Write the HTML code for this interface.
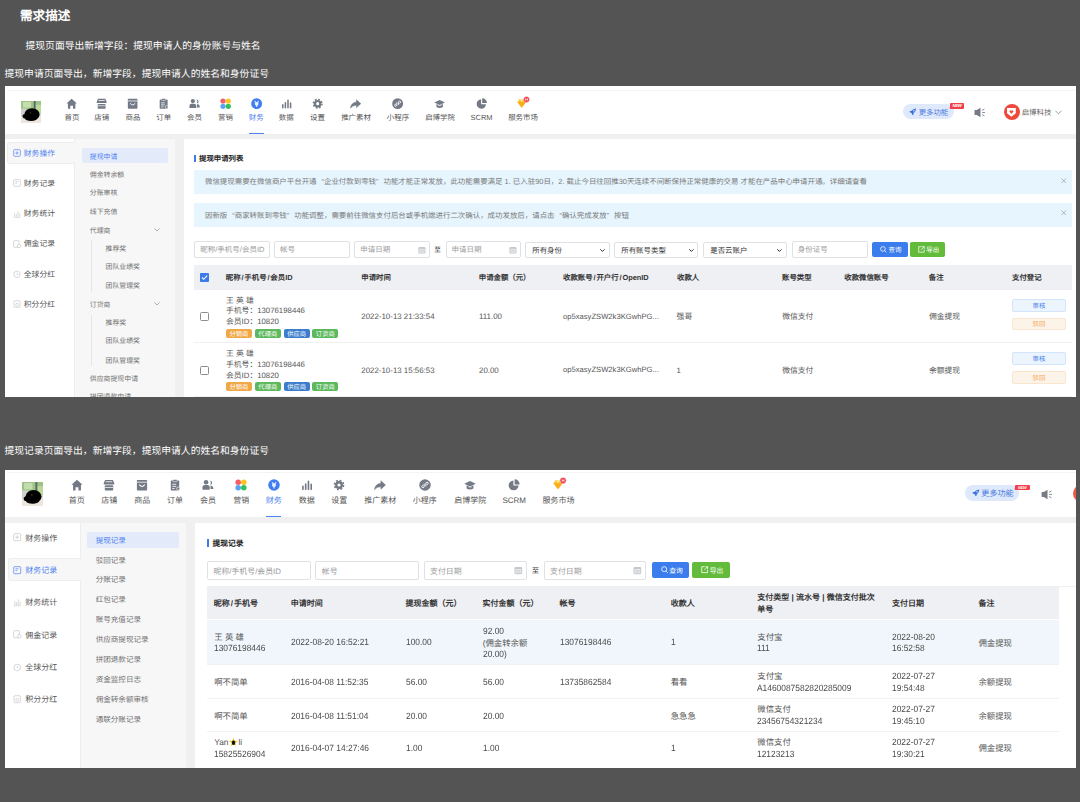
<!DOCTYPE html><html lang="zh-CN"><head><meta charset="utf-8"><style>
html,body{margin:0;padding:0;}
body{font-weight:300;text-rendering:geometricPrecision;width:1080px;height:802px;background:#545454;position:relative;overflow:hidden;font-family:"Liberation Sans",sans-serif;}
.a{position:absolute;}
svg.a{overflow:visible;}
.t{white-space:nowrap;}
.sl{padding:0 0.12em;}
.q1,.q2{display:inline-block;width:1em;}
.q1{text-align:right}
</style></head><body>
<div class="a t" style="left:20.00px;top:8px;font-size:12.6px;line-height:16px;color:#fff;font-weight:bold;">需求描述</div>
<div class="a t" style="left:25.50px;top:39px;font-size:9.8px;line-height:16px;color:#fff;">提现页面导出新增字段：提现申请人的身份账号与姓名</div>
<div class="a t" style="left:4.50px;top:67px;font-size:9.8px;line-height:16px;color:#fff;">提现申请页面导出，新增字段，提现申请人的姓名和身份证号</div>
<div class="a t" style="left:4.50px;top:444px;font-size:9.8px;line-height:16px;color:#fff;">提现记录页面导出，新增字段，提现申请人的姓名和身份证号</div>
<div class="a" style="left:5.00px;top:86.00px;width:1070.50px;height:48.00px;background:#fff"></div>
<div class="a" style="left:6.50px;top:90.00px;width:1069.00px;height:1.00px;background:#f4f4f4"></div>
<svg class="a" style="left:21px;top:101px" width="20" height="22" viewBox="0 0 100 115" preserveAspectRatio="none"><defs><filter id="bl86" x="-20%" y="-20%" width="140%" height="140%"><feGaussianBlur stdDeviation="3"/></filter></defs><rect width="100" height="115" fill="#dcdcd6"/><g filter="url(#bl86)"><rect x="0" y="0" width="100" height="60" fill="#9cc585"/><rect x="10" y="5" width="40" height="30" fill="#c4dcae"/><rect x="72" y="20" width="28" height="45" fill="#bcd99a"/><rect x="64" y="0" width="9" height="55" fill="#5b6670"/><rect x="0" y="40" width="30" height="40" fill="#cfcfcb"/><rect x="0" y="80" width="100" height="35" fill="#ece6df"/><ellipse cx="55" cy="70" rx="38" ry="32" fill="#050505"/><ellipse cx="22" cy="80" rx="14" ry="12" fill="#050505"/><ellipse cx="50" cy="92" rx="30" ry="12" fill="#050505"/></g><circle cx="47" cy="62" r="3.5" fill="#5d4d1c"/></svg>
<svg class="a" style="left:66.35px;top:98.35px" width="11.30" height="11.30" viewBox="0 0 20 20"><path d="M10 1.2 L19.2 9.6 L16.6 9.6 L16.6 18.2 Q16.6 19 15.8 19 L12.4 19 L12.4 13.6 L7.6 13.6 L7.6 19 L4.2 19 Q3.4 19 3.4 18.2 L3.4 9.6 L0.8 9.6 Z" fill="#737985"/></svg>
<div class="a t" style="left:72.00px;top:110px;font-size:7.45px;line-height:16px;color:#555;transform:translateX(-50%);">首页</div>
<svg class="a" style="left:96.10px;top:98.35px" width="11.30" height="11.30" viewBox="0 0 20 20"><path d="M3.5 1.5 H16.5 L19 7.5 Q19 9 17.5 9 H2.5 Q1 9 1 7.5 Z" fill="#737985"/><rect x="4.5" y="4" width="11" height="1.3" fill="#fff"/><rect x="3" y="10.5" width="14" height="8.5" rx="1.5" fill="#737985"/><rect x="3" y="13.3" width="14" height="1.2" fill="#fff"/></svg>
<div class="a t" style="left:101.75px;top:110px;font-size:7.45px;line-height:16px;color:#555;transform:translateX(-50%);">店铺</div>
<svg class="a" style="left:127.35px;top:98.35px" width="11.30" height="11.30" viewBox="0 0 20 20"><rect x="1.5" y="1.5" width="17" height="17.5" rx="1.2" fill="#737985"/><rect x="1.5" y="4.6" width="17" height="1.3" fill="#fff"/><path d="M5.8 9.8 Q10 15.2 14.2 9.8" stroke="#fff" stroke-width="1.7" fill="none" stroke-linecap="round"/></svg>
<div class="a t" style="left:133.00px;top:110px;font-size:7.45px;line-height:16px;color:#555;transform:translateX(-50%);">商品</div>
<svg class="a" style="left:158.10px;top:98.35px" width="11.30" height="11.30" viewBox="0 0 20 20"><path d="M3 3.5 Q3 2.5 4 2.5 H16 Q17 2.5 17 3.5 V19 H4 Q3 19 3 18 Z" fill="#737985"/><rect x="6.5" y="0.8" width="7" height="3.5" rx="1" fill="#737985" stroke="#fff" stroke-width="0.9"/><rect x="5.5" y="8" width="6.5" height="1.4" fill="#fff"/><rect x="5.5" y="11.5" width="6.5" height="1.4" fill="#fff"/><rect x="5.5" y="15" width="4" height="1.4" fill="#fff"/><circle cx="15.3" cy="16" r="2.6" fill="#737985" stroke="#fff" stroke-width="1"/></svg>
<div class="a t" style="left:163.75px;top:110px;font-size:7.45px;line-height:16px;color:#555;transform:translateX(-50%);">订单</div>
<svg class="a" style="left:188.85px;top:98.35px" width="11.30" height="11.30" viewBox="0 0 20 20"><circle cx="6.8" cy="5.4" r="3.8" fill="#737985"/><path d="M0.8 17.8 V13.8 Q0.8 10.2 4.4 10.2 H9.2 Q12.8 10.2 12.8 13.8 V17.8 Z" fill="#737985"/><path d="M12.6 2.6 Q17 2.8 17 6.4 Q17 9.6 13.4 9.8 Q14.8 8.2 14.8 6.2 Q14.8 4.2 12.6 2.6 Z" fill="#737985"/><path d="M14.2 10.8 Q18.8 11.2 18.8 14.8 V16.8 H14.2 Z" fill="#737985"/></svg>
<div class="a t" style="left:194.50px;top:110px;font-size:7.45px;line-height:16px;color:#555;transform:translateX(-50%);">会员</div>
<svg class="a" style="left:219.85px;top:98.35px" width="11.30" height="11.30" viewBox="0 0 20 20"><circle cx="5.3" cy="5.3" r="4.6" fill="#f25f6b"/><circle cx="14.7" cy="5.3" r="4.6" fill="#fcc520"/><circle cx="5.3" cy="14.7" r="4.6" fill="#5ba4f5"/><circle cx="14.7" cy="14.7" r="4.6" fill="#2fc25b"/></svg>
<div class="a t" style="left:225.50px;top:110px;font-size:7.45px;line-height:16px;color:#555;transform:translateX(-50%);">营销</div>
<svg class="a" style="left:250.60px;top:98.35px" width="11.30" height="11.30" viewBox="0 0 20 20"><circle cx="10" cy="10" r="9.6" fill="#3f7df0"/><path d="M7 5.8 L9 8.6 M13 5.8 L11 8.6" stroke="#e8efff" stroke-width="1.8" stroke-linecap="round"/><circle cx="10" cy="10.2" r="3.3" fill="#e8efff"/><path d="M10 12 V15" stroke="#e8efff" stroke-width="2" stroke-linecap="round"/></svg>
<div class="a t" style="left:256.25px;top:110px;font-size:7.45px;line-height:16px;color:#4d7ff0;transform:translateX(-50%);">财务</div>
<svg class="a" style="left:280.60px;top:98.35px" width="11.30" height="11.30" viewBox="0 0 20 20"><path d="M3.2 12 V17.2 M7.8 8.5 V17.2 M12.4 4 V17.2 M17 9 V17.2" stroke="#737985" stroke-width="2.7" stroke-linecap="round"/></svg>
<div class="a t" style="left:286.25px;top:110px;font-size:7.45px;line-height:16px;color:#555;transform:translateX(-50%);">数据</div>
<svg class="a" style="left:311.85px;top:98.35px" width="11.30" height="11.30" viewBox="0 0 20 20"><circle cx="10" cy="10" r="6.6" fill="#737985"/><circle cx="10" cy="10" r="7.6" fill="none" stroke="#737985" stroke-width="2.6" stroke-dasharray="3.2 2.77"/><circle cx="10" cy="10" r="2.7" fill="#fff"/></svg>
<div class="a t" style="left:317.50px;top:110px;font-size:7.45px;line-height:16px;color:#555;transform:translateX(-50%);">设置</div>
<svg class="a" style="left:350.35px;top:98.35px" width="11.30" height="11.30" viewBox="0 0 20 20"><path d="M11.5 3 L19.2 10 L11.5 17 L11.5 13 Q4.5 12.6 0.8 18 Q1.6 8.2 11.5 7 Z" fill="#737985" stroke="#737985" stroke-width="0.8" stroke-linejoin="round"/></svg>
<div class="a t" style="left:356.00px;top:110px;font-size:7.45px;line-height:16px;color:#555;transform:translateX(-50%);">推广素材</div>
<svg class="a" style="left:392.35px;top:98.35px" width="11.30" height="11.30" viewBox="0 0 20 20"><circle cx="10" cy="10" r="9.6" fill="#737985"/><path d="M8.6 8.3 V12.2 Q8.6 14.6 6.4 14.6 Q4.5 14.4 4.6 12.6 Q4.8 11 6.4 10.7 M11.4 11.7 V7.8 Q11.4 5.4 13.6 5.4 Q15.5 5.6 15.4 7.4 Q15.2 9 13.6 9.3" stroke="#fff" stroke-width="1.6" fill="none" stroke-linecap="round"/></svg>
<div class="a t" style="left:398.00px;top:110px;font-size:7.45px;line-height:16px;color:#555;transform:translateX(-50%);">小程序</div>
<svg class="a" style="left:434.35px;top:98.35px" width="11.30" height="11.30" viewBox="0 0 20 20"><path d="M10 3.5 L19.5 8 L10 12.5 L0.5 8 Z" fill="#737985"/><path d="M4.3 10.5 V16 Q10 19.3 15.7 16 V10.5 L10 13.3 Z" fill="#737985"/><rect x="7" y="12.8" width="6" height="1" fill="#fff"/></svg>
<div class="a t" style="left:440.00px;top:110px;font-size:7.45px;line-height:16px;color:#555;transform:translateX(-50%);">启博学院</div>
<svg class="a" style="left:475.85px;top:98.35px" width="11.30" height="11.30" viewBox="0 0 20 20"><path d="M9 2.3 A8.3 8.3 0 1 0 17.7 11 L9 11 Z" fill="#737985"/><path d="M11 0.6 A8.4 8.4 0 0 1 19.4 9 L11 9 Z" fill="#737985"/></svg>
<div class="a t" style="left:481.50px;top:110px;font-size:7.45px;line-height:16px;color:#555;transform:translateX(-50%);">SCRM</div>
<svg class="a" style="left:517.35px;top:98.35px" width="11.30" height="11.30" viewBox="0 0 20 20"><path d="M0.7 7 L4.5 1.7 H12.2 L16 7 L8.35 17.2 Z" fill="#fdc530"/><path d="M0.7 7 H16 L8.35 17.2 Z" fill="#f9ad1c"/><path d="M4.5 1.7 L8.35 7 L12.2 1.7 Z" fill="#ffe38f"/><circle cx="16.8" cy="2.6" r="5.2" fill="#ef3f4a" stroke="#fff" stroke-width="0.6"/><path d="M15.2 0.4 V4.8 M18.4 0.4 V4.8 M15.2 2.6 H18.4" stroke="#fff" stroke-width="1"/></svg>
<div class="a t" style="left:523.00px;top:110px;font-size:7.45px;line-height:16px;color:#555;transform:translateX(-50%);">服务市场</div>
<div class="a" style="left:249.00px;top:132.60px;width:15.00px;height:1.60px;background:#4d86f2"></div>
<div class="a" style="left:902.6px;top:104px;width:51.39999999999998px;height:15px;border-radius:7.5px;background:#dfe9fc"></div>
<svg class="a" style="left:909.35px;top:107.75px" width="7.50" height="7.50" viewBox="0 0 20 20"><path d="M19 1 Q11 1 6 8 L3 8 L1 11 L5 12 L8 15 L9 19 L12 17 L12 14 Q19 9 19 1 Z" fill="#3b72e0"/><circle cx="13" cy="7" r="2" fill="#dfe9fc"/></svg>
<div class="a t" style="left:918.65px;top:105px;font-size:7.4px;line-height:16px;color:#4a7be0;">更多功能</div>
<div class="a" style="left:950px;top:103.3px;width:14px;height:5.700000000000003px;background:#f2404a;border-radius:1px;color:#fff;font-size:4.28px;line-height:5.700000000000003px;text-align:center;font-style:italic;font-weight:bold;letter-spacing:-0.3px">NEW</div>
<div class="a" style="left:948.50px;top:106.80px;width:0;height:0;border-top:1.5px solid transparent;border-bottom:1.5px solid transparent;border-right:2px solid #f2404a"></div>
<svg class="a" style="left:974.4px;top:107px" width="11.100000000000023" height="11" viewBox="0 0 12 12"><path d="M0.5 3.8 Q0.5 3.3 1 3.3 H3 L7 0.8 V11.2 L3 8.7 H1 Q0.5 8.7 0.5 8.2 Z" fill="#767a82"/><path d="M9 3.6 L11 2.4 M9.2 6 H11.5 M9 8.4 L11 9.6" stroke="#767a82" stroke-width="0.9" stroke-linecap="round"/></svg>
<div class="a" style="left:1003.8px;top:104.3px;width:16px;height:16px;border-radius:50%;background:#ee4a3c"></div>
<svg class="a" style="left:1007.40px;top:108.30px" width="8.80" height="8.80" viewBox="0 0 10 10"><path d="M0 0 H10 V6 L5 10 L0 6 Z" fill="#fff"/><path d="M5 6.5 L2.8 4.3 Q2.5 2.5 4 2.5 L5 3.3 L6 2.5 Q7.5 2.5 7.2 4.3 Z" fill="#ee4a3c"/></svg>
<div class="a t" style="left:1021.70px;top:105px;font-size:7.45px;line-height:16px;color:#666;">启博科技</div>
<svg class="a" style="left:1055px;top:110.3px" width="7" height="5" viewBox="0 0 7 5"><path d="M0.5 0.8 L3.5 3.8 L6.5 0.8" stroke="#888" stroke-width="0.8" fill="none"/></svg>
<div class="a" style="left:5.00px;top:134.00px;width:1070.50px;height:262.50px;background:#f0f0f0"></div>
<div class="a" style="left:5.00px;top:139.00px;width:69.00px;height:257.50px;background:#fff"></div>
<div class="a" style="left:74.00px;top:139.00px;width:101.00px;height:257.50px;background:#f7f7f7;border-left:1px solid #ededed;box-sizing:border-box"></div>
<div class="a" style="left:184.00px;top:139.00px;width:891.50px;height:257.50px;background:#fff"></div>
<div class="a" style="left:7.40px;top:142.00px;width:67.60px;height:22.30px;background:#f7f7f7;border-radius:3px 0 0 3px;border:1px solid #ededed;border-right:none;box-sizing:border-box"></div>
<svg class="a" style="left:12.8px;top:148.90px" width="8" height="8" viewBox="0 0 12 12"><rect x="1" y="1" width="10" height="10" rx="1.5" stroke="#4d7ff0" stroke-width="1" fill="none"/><path d="M6 3.5 V8.5 M3.5 6 H8.5" stroke="#4d7ff0" stroke-width="1"/></svg>
<div class="a t" style="left:23.80px;top:146px;font-size:7.8px;line-height:16px;color:#4d7ff0;">财务操作</div>
<svg class="a" style="left:12.8px;top:179.20px" width="8" height="8" viewBox="0 0 12 12"><rect x="1" y="1" width="10" height="10" rx="1" stroke="#c4c4c4" stroke-width="1" fill="none"/><path d="M3.5 4 H8 M3.5 6.5 H6" stroke="#c4c4c4" stroke-width="1"/></svg>
<div class="a t" style="left:23.80px;top:176px;font-size:7.8px;line-height:16px;color:#555;">财务记录</div>
<svg class="a" style="left:12.8px;top:209.50px" width="8" height="8" viewBox="0 0 12 12"><path d="M1 11 H11 M2.5 10 V4 M5 10 V6 M7.5 10 V2 M10 10 V5" stroke="#c4c4c4" stroke-width="0.9"/></svg>
<div class="a t" style="left:23.80px;top:206px;font-size:7.8px;line-height:16px;color:#555;">财务统计</div>
<svg class="a" style="left:12.8px;top:239.50px" width="8" height="8" viewBox="0 0 12 12"><rect x="1" y="1" width="8" height="10" rx="1" stroke="#c4c4c4" stroke-width="1" fill="none"/><circle cx="9" cy="9" r="2.5" stroke="#c4c4c4" stroke-width="0.9" fill="#fff"/></svg>
<div class="a t" style="left:23.80px;top:236px;font-size:7.8px;line-height:16px;color:#555;">佣金记录</div>
<svg class="a" style="left:12.8px;top:269.60px" width="8" height="8" viewBox="0 0 12 12"><circle cx="6" cy="6.5" r="4.8" stroke="#c4c4c4" stroke-width="1" fill="none"/><path d="M6 4 V6.5 H8" stroke="#c4c4c4" stroke-width="0.9" fill="none"/></svg>
<div class="a t" style="left:23.80px;top:267px;font-size:7.8px;line-height:16px;color:#555;">全球分红</div>
<svg class="a" style="left:12.8px;top:299.60px" width="8" height="8" viewBox="0 0 12 12"><rect x="1.5" y="1" width="9" height="10" rx="1.5" stroke="#c4c4c4" stroke-width="1" fill="none"/><circle cx="6" cy="7" r="2" stroke="#c4c4c4" stroke-width="0.9" fill="none"/></svg>
<div class="a t" style="left:23.80px;top:297px;font-size:7.8px;line-height:16px;color:#555;">积分分红</div>
<div class="a" style="left:82.00px;top:148.00px;width:86.00px;height:15.00px;background:#e3ebfb;border-radius:2px"></div>
<div class="a t" style="left:89.80px;top:150px;font-size:6.9px;line-height:16px;color:#4d7ff0;">提现申请</div>
<div class="a t" style="left:89.80px;top:168px;font-size:6.9px;line-height:16px;color:#707070;">佣金转余额</div>
<div class="a t" style="left:89.80px;top:186px;font-size:6.9px;line-height:16px;color:#707070;">分账审核</div>
<div class="a t" style="left:89.80px;top:205px;font-size:6.9px;line-height:16px;color:#707070;">线下充值</div>
<div class="a t" style="left:89.80px;top:224px;font-size:6.9px;line-height:16px;color:#707070;">代理商</div>
<div class="a t" style="left:105.50px;top:242px;font-size:6.9px;line-height:16px;color:#707070;">推荐奖</div>
<div class="a t" style="left:105.50px;top:260px;font-size:6.9px;line-height:16px;color:#707070;">团队业绩奖</div>
<div class="a t" style="left:105.50px;top:279px;font-size:6.9px;line-height:16px;color:#707070;">团队管理奖</div>
<div class="a t" style="left:89.80px;top:298px;font-size:6.9px;line-height:16px;color:#707070;">订货商</div>
<div class="a t" style="left:105.50px;top:316px;font-size:6.9px;line-height:16px;color:#707070;">推荐奖</div>
<div class="a t" style="left:105.50px;top:334px;font-size:6.9px;line-height:16px;color:#707070;">团队业绩奖</div>
<div class="a t" style="left:105.50px;top:354px;font-size:6.9px;line-height:16px;color:#707070;">团队管理奖</div>
<div class="a t" style="left:89.80px;top:372px;font-size:6.9px;line-height:16px;color:#707070;">供应商提现申请</div>
<div class="a t" style="left:89.80px;top:390px;font-size:6.9px;line-height:16px;color:#707070;">拼团退款申请</div>
<svg class="a" style="left:153.7px;top:228.20px" width="6" height="3.60" viewBox="0 0 10 6"><path d="M0.7 0.7 L5 5 L9.3 0.7" stroke="#888" stroke-width="1.1" fill="none"/></svg>
<svg class="a" style="left:153.7px;top:302.20px" width="6" height="3.60" viewBox="0 0 10 6"><path d="M0.7 0.7 L5 5 L9.3 0.7" stroke="#888" stroke-width="1.1" fill="none"/></svg>
<div class="a" style="left:91.00px;top:240.00px;width:0.70px;height:52.40px;background:#e6e6e6"></div>
<div class="a" style="left:91.00px;top:314.60px;width:0.70px;height:51.90px;background:#e6e6e6"></div>
<div class="a" style="left:5.00px;top:396.50px;width:1075.00px;height:5.50px;background:#545454"></div>
<div class="a" style="left:194.25px;top:155.00px;width:1.75px;height:6.50px;background:#3d7bea"></div>
<div class="a t" style="left:199.00px;top:151px;font-size:7.4px;line-height:16px;color:#222;font-weight:bold;">提现申请列表</div>
<div class="a" style="left:194.00px;top:169.50px;width:878.00px;height:24.50px;background:#e6f5fe"></div>
<div class="a" style="left:194.00px;top:202.50px;width:878.00px;height:24.30px;background:#e6f5fe"></div>
<div class="a t" style="left:205.00px;top:174px;font-size:7.45px;line-height:16px;color:#7a7a7a;">微信提现需要在微信商户平台开通<span class=q1>“</span>企业付款到零钱<span class=q2>”</span>功能才能正常发放，此功能需要满足 1. 已入驻90日，2. 截止今日往回推30天连续不间断保持正常健康的交易 才能在产品中心申请开通。详细请查看</div>
<div class="a t" style="left:205.00px;top:208px;font-size:7.45px;line-height:16px;color:#7a7a7a;">因新版<span class=q1>“</span>商家转账到零钱<span class=q2>”</span>功能调整，需要前往微信支付后台或手机端进行二次确认，成功发放后，请点击<span class=q1>“</span>确认完成发放<span class=q2>”</span>按钮</div>
<svg class="a" style="left:1061px;top:177.60px" width="5.6" height="5.6" viewBox="0 0 10 10"><path d="M1 1 L9 9 M9 1 L1 9" stroke="#999" stroke-width="1.2"/></svg>
<svg class="a" style="left:1061px;top:210.40px" width="5.6" height="5.6" viewBox="0 0 10 10"><path d="M1 1 L9 9 M9 1 L1 9" stroke="#999" stroke-width="1.2"/></svg>
<div class="a" style="left:194.25px;top:241.25px;width:75.25px;height:17.00px;box-sizing:border-box;border:1px solid #dfe1e5;border-radius:2px;background:#fff"></div>
<div class="a t" style="left:200.25px;top:242px;font-size:7.5px;line-height:16px;color:#9a9a9a;">昵称/手机号/会员ID</div>
<div class="a" style="left:274.00px;top:241.25px;width:75.75px;height:17.00px;box-sizing:border-box;border:1px solid #dfe1e5;border-radius:2px;background:#fff"></div>
<div class="a t" style="left:280.00px;top:242px;font-size:7.5px;line-height:16px;color:#9a9a9a;">帐号</div>
<div class="a" style="left:354.25px;top:241.25px;width:75.25px;height:17.00px;box-sizing:border-box;border:1px solid #dfe1e5;border-radius:2px;background:#fff"></div>
<div class="a t" style="left:360.25px;top:242px;font-size:7.5px;line-height:16px;color:#9a9a9a;">申请日期</div>
<svg class="a" style="left:417.94px;top:245.84px" width="7.82" height="7.82" viewBox="0 0 10 10"><rect x="0.5" y="1.2" width="9" height="8.3" rx="1.6" fill="#c4c7cc"/><rect x="1.6" y="3.6" width="6.8" height="4.9" rx="0.5" fill="#eceef1"/><path d="M1.6 5.3 H8.4 M1.6 6.9 H8.4 M3.9 3.6 V8.5 M6.1 3.6 V8.5" stroke="#c4c7cc" stroke-width="0.5"/></svg>
<div class="a t" style="left:434.20px;top:243px;font-size:6.6px;line-height:16px;color:#333;font-weight:500;">至</div>
<div class="a" style="left:445.50px;top:241.25px;width:75.00px;height:17.00px;box-sizing:border-box;border:1px solid #dfe1e5;border-radius:2px;background:#fff"></div>
<div class="a t" style="left:451.50px;top:242px;font-size:7.5px;line-height:16px;color:#9a9a9a;">申请日期</div>
<svg class="a" style="left:508.94px;top:245.84px" width="7.82" height="7.82" viewBox="0 0 10 10"><rect x="0.5" y="1.2" width="9" height="8.3" rx="1.6" fill="#c4c7cc"/><rect x="1.6" y="3.6" width="6.8" height="4.9" rx="0.5" fill="#eceef1"/><path d="M1.6 5.3 H8.4 M1.6 6.9 H8.4 M3.9 3.6 V8.5 M6.1 3.6 V8.5" stroke="#c4c7cc" stroke-width="0.5"/></svg>
<div class="a" style="left:525.25px;top:242.00px;width:84.25px;height:16.25px;box-sizing:border-box;border:1px solid #dfe1e5;border-radius:2px;background:#fff"></div>
<div class="a t" style="left:532.25px;top:243px;font-size:7.45px;line-height:16px;color:#333;">所有身份</div>
<svg class="a" style="left:599.75px;top:248.96px" width="4.875" height="2.92" viewBox="0 0 10 6"><path d="M0.7 0.7 L5 5 L9.3 0.7" stroke="#222" stroke-width="1.9" fill="none"/></svg>
<div class="a" style="left:614.25px;top:242.00px;width:84.00px;height:16.25px;box-sizing:border-box;border:1px solid #dfe1e5;border-radius:2px;background:#fff"></div>
<div class="a t" style="left:621.25px;top:243px;font-size:7.45px;line-height:16px;color:#333;">所有账号类型</div>
<svg class="a" style="left:688.5px;top:248.96px" width="4.875" height="2.92" viewBox="0 0 10 6"><path d="M0.7 0.7 L5 5 L9.3 0.7" stroke="#222" stroke-width="1.9" fill="none"/></svg>
<div class="a" style="left:703.25px;top:242.00px;width:83.50px;height:16.25px;box-sizing:border-box;border:1px solid #dfe1e5;border-radius:2px;background:#fff"></div>
<div class="a t" style="left:710.25px;top:243px;font-size:7.45px;line-height:16px;color:#333;">是否云账户</div>
<svg class="a" style="left:777.0px;top:248.96px" width="4.875" height="2.92" viewBox="0 0 10 6"><path d="M0.7 0.7 L5 5 L9.3 0.7" stroke="#222" stroke-width="1.9" fill="none"/></svg>
<div class="a" style="left:791.75px;top:241.25px;width:75.75px;height:17.00px;box-sizing:border-box;border:1px solid #dfe1e5;border-radius:2px;background:#fff"></div>
<div class="a t" style="left:797.75px;top:242px;font-size:7.5px;line-height:16px;color:#9a9a9a;">身份证号</div>
<div class="a" style="left:871.75px;top:241.75px;width:35.75px;height:15.25px;background:#3b7ded;border-radius:2px"></div>
<svg class="a" style="left:880.33px;top:245.94px" width="6.86" height="6.86" viewBox="0 0 10 10"><circle cx="4.3" cy="4.3" r="3.4" stroke="#fff" stroke-width="1.1" fill="none"/><path d="M6.8 6.8 L9.3 9.3" stroke="#fff" stroke-width="1.1"/></svg>
<div class="a t" style="left:888.39px;top:243px;font-size:6.5px;line-height:16px;color:#fff;">查询</div>
<div class="a" style="left:909.50px;top:241.75px;width:35.75px;height:15.25px;background:#62bb3a;border-radius:2px"></div>
<svg class="a" style="left:918.08px;top:245.94px" width="6.86" height="6.86" viewBox="0 0 10 10"><path d="M5 1 H1 V9 H9 V5" stroke="#fff" stroke-width="1.1" fill="none"/><path d="M4.5 5.5 L9 1 M6 1 H9 V4" stroke="#fff" stroke-width="1.1" fill="none"/></svg>
<div class="a t" style="left:926.14px;top:243px;font-size:6.5px;line-height:16px;color:#fff;">导出</div>
<div class="a" style="left:194.00px;top:265.00px;width:878.00px;height:24.50px;background:#eff0f4"></div>
<svg class="a" style="left:200.00px;top:273.00px" width="9" height="9" viewBox="0 0 10 10"><rect x="0" y="0" width="10" height="10" rx="1" fill="#3d7bea"/><path d="M2.2 5 L4.2 7 L8 3" stroke="#fff" stroke-width="1.2" fill="none"/></svg>
<div class="a t" style="left:225.75px;top:270px;font-size:7.4px;line-height:16px;color:#333;font-weight:bold;">昵称<span class=sl>/</span>手机号<span class=sl>/</span>会员ID</div>
<div class="a t" style="left:361.25px;top:270px;font-size:7.4px;line-height:16px;color:#333;font-weight:bold;">申请时间</div>
<div class="a t" style="left:478.75px;top:270px;font-size:7.4px;line-height:16px;color:#333;font-weight:bold;">申请金额（元）</div>
<div class="a t" style="left:563.00px;top:270px;font-size:7.4px;line-height:16px;color:#333;font-weight:bold;">收款账号<span class=sl>/</span>开户行<span class=sl>/</span>OpenID</div>
<div class="a t" style="left:677.00px;top:270px;font-size:7.4px;line-height:16px;color:#333;font-weight:bold;">收款人</div>
<div class="a t" style="left:782.00px;top:270px;font-size:7.4px;line-height:16px;color:#333;font-weight:bold;">账号类型</div>
<div class="a t" style="left:844.25px;top:270px;font-size:7.4px;line-height:16px;color:#333;font-weight:bold;">收款微信账号</div>
<div class="a t" style="left:928.75px;top:270px;font-size:7.4px;line-height:16px;color:#333;font-weight:bold;">备注</div>
<div class="a t" style="left:1012.00px;top:270px;font-size:7.4px;line-height:16px;color:#333;font-weight:bold;">支付登记</div>
<div class="a" style="left:194.00px;top:341.90px;width:878.00px;height:1.00px;background:#f0f0f0"></div>
<div class="a" style="left:200.00px;top:312.25px;width:9px;height:9px;box-sizing:border-box;border:1px solid #8c8c8c;border-radius:1.5px;background:#fff"></div>
<div class="a t" style="left:226.00px;top:293px;font-size:7.8px;line-height:16px;color:#555;">王&nbsp;英&nbsp;雄</div>
<div class="a t" style="left:226.00px;top:303px;font-size:7.8px;line-height:16px;color:#555;">手机号：13076198446</div>
<div class="a t" style="left:226.00px;top:314px;font-size:7.8px;line-height:16px;color:#555;">会员ID：10820</div>
<div class="a" style="left:225.60px;top:328.50px;width:26.70px;height:9.20px;background:#f0a745;border-radius:2px;color:#fff;font-size:6.3px;font-weight:400;display:flex;align-items:center;justify-content:center">分销商</div>
<div class="a" style="left:254.60px;top:328.50px;width:26.40px;height:9.20px;background:#5cb85c;border-radius:2px;color:#fff;font-size:6.3px;font-weight:400;display:flex;align-items:center;justify-content:center">代理商</div>
<div class="a" style="left:283.60px;top:328.50px;width:26.00px;height:9.20px;background:#3b7dcc;border-radius:2px;color:#fff;font-size:6.3px;font-weight:400;display:flex;align-items:center;justify-content:center">供应商</div>
<div class="a" style="left:312.20px;top:328.50px;width:26.20px;height:9.20px;background:#5cb85c;border-radius:2px;color:#fff;font-size:6.3px;font-weight:400;display:flex;align-items:center;justify-content:center">订货商</div>
<div class="a t" style="left:361.30px;top:309px;font-size:7.9px;line-height:16px;color:#555;">2022-10-13 21:33:54</div>
<div class="a t" style="left:479.00px;top:309px;font-size:7.9px;line-height:16px;color:#555;">111.00</div>
<div class="a t" style="left:563.00px;top:309px;font-size:7.64px;line-height:16px;color:#555;">op5xasyZSW2k3KGwhPG...</div>
<div class="a t" style="left:676.60px;top:309px;font-size:7.8px;line-height:16px;color:#555;">强哥</div>
<div class="a t" style="left:782.20px;top:309px;font-size:7.8px;line-height:16px;color:#555;">微信支付</div>
<div class="a t" style="left:928.90px;top:309px;font-size:7.8px;line-height:16px;color:#555;">佣金提现</div>
<div class="a" style="left:194.00px;top:396.00px;width:878.00px;height:1.00px;background:#f0f0f0"></div>
<div class="a" style="left:200.00px;top:365.75px;width:9px;height:9px;box-sizing:border-box;border:1px solid #8c8c8c;border-radius:1.5px;background:#fff"></div>
<div class="a t" style="left:226.00px;top:346px;font-size:7.8px;line-height:16px;color:#555;">王&nbsp;英&nbsp;雄</div>
<div class="a t" style="left:226.00px;top:357px;font-size:7.8px;line-height:16px;color:#555;">手机号：13076198446</div>
<div class="a t" style="left:226.00px;top:368px;font-size:7.8px;line-height:16px;color:#555;">会员ID：10820</div>
<div class="a" style="left:225.60px;top:382.00px;width:26.70px;height:9.20px;background:#f0a745;border-radius:2px;color:#fff;font-size:6.3px;font-weight:400;display:flex;align-items:center;justify-content:center">分销商</div>
<div class="a" style="left:254.60px;top:382.00px;width:26.40px;height:9.20px;background:#5cb85c;border-radius:2px;color:#fff;font-size:6.3px;font-weight:400;display:flex;align-items:center;justify-content:center">代理商</div>
<div class="a" style="left:283.60px;top:382.00px;width:26.00px;height:9.20px;background:#3b7dcc;border-radius:2px;color:#fff;font-size:6.3px;font-weight:400;display:flex;align-items:center;justify-content:center">供应商</div>
<div class="a" style="left:312.20px;top:382.00px;width:26.20px;height:9.20px;background:#5cb85c;border-radius:2px;color:#fff;font-size:6.3px;font-weight:400;display:flex;align-items:center;justify-content:center">订货商</div>
<div class="a t" style="left:361.30px;top:363px;font-size:7.9px;line-height:16px;color:#555;">2022-10-13 15:56:53</div>
<div class="a t" style="left:479.00px;top:363px;font-size:7.9px;line-height:16px;color:#555;">20.00</div>
<div class="a t" style="left:563.00px;top:362px;font-size:7.64px;line-height:16px;color:#555;">op5xasyZSW2k3KGwhPG...</div>
<div class="a t" style="left:676.60px;top:363px;font-size:7.8px;line-height:16px;color:#555;">1</div>
<div class="a t" style="left:782.20px;top:363px;font-size:7.8px;line-height:16px;color:#555;">微信支付</div>
<div class="a t" style="left:928.90px;top:363px;font-size:7.8px;line-height:16px;color:#555;">余额提现</div>
<div class="a" style="left:1012.1px;top:299.2px;width:53.6px;height:12.40px;box-sizing:border-box;border:0.8px solid #d3e5fb;background:#ecf4fe;border-radius:2px;color:#4a85ea;font-size:6.4px;display:flex;align-items:center;justify-content:center">审核</div>
<div class="a" style="left:1012.1px;top:317.6px;width:53.6px;height:12.70px;box-sizing:border-box;border:0.8px solid #fae6cf;background:#fdf4e9;border-radius:2px;color:#f5a55a;font-size:6.4px;display:flex;align-items:center;justify-content:center">驳回</div>
<div class="a" style="left:1012.1px;top:352.2px;width:53.6px;height:12.50px;box-sizing:border-box;border:0.8px solid #d3e5fb;background:#ecf4fe;border-radius:2px;color:#4a85ea;font-size:6.4px;display:flex;align-items:center;justify-content:center">审核</div>
<div class="a" style="left:1012.1px;top:370.9px;width:53.6px;height:12.70px;box-sizing:border-box;border:0.8px solid #fae6cf;background:#fdf4e9;border-radius:2px;color:#f5a55a;font-size:6.4px;display:flex;align-items:center;justify-content:center">驳回</div>
<div class="a" style="left:0.00px;top:396.50px;width:1080.00px;height:5.50px;background:#545454"></div>
<div class="a" style="left:5.00px;top:470.00px;width:1071.00px;height:47.00px;background:#fff"></div>
<div class="a" style="left:6.50px;top:472.00px;width:1069.50px;height:1.00px;background:#f4f4f4"></div>
<svg class="a" style="left:22px;top:482px" width="21" height="24" viewBox="0 0 100 115" preserveAspectRatio="none"><defs><filter id="bl470" x="-20%" y="-20%" width="140%" height="140%"><feGaussianBlur stdDeviation="3"/></filter></defs><rect width="100" height="115" fill="#dcdcd6"/><g filter="url(#bl470)"><rect x="0" y="0" width="100" height="60" fill="#9cc585"/><rect x="10" y="5" width="40" height="30" fill="#c4dcae"/><rect x="72" y="20" width="28" height="45" fill="#bcd99a"/><rect x="64" y="0" width="9" height="55" fill="#5b6670"/><rect x="0" y="40" width="30" height="40" fill="#cfcfcb"/><rect x="0" y="80" width="100" height="35" fill="#ece6df"/><ellipse cx="55" cy="70" rx="38" ry="32" fill="#050505"/><ellipse cx="22" cy="80" rx="14" ry="12" fill="#050505"/><ellipse cx="50" cy="92" rx="30" ry="12" fill="#050505"/></g><circle cx="47" cy="62" r="3.5" fill="#5d4d1c"/></svg>
<svg class="a" style="left:70.75px;top:479.00px" width="12.00" height="12.00" viewBox="0 0 20 20"><path d="M10 1.2 L19.2 9.6 L16.6 9.6 L16.6 18.2 Q16.6 19 15.8 19 L12.4 19 L12.4 13.6 L7.6 13.6 L7.6 19 L4.2 19 Q3.4 19 3.4 18.2 L3.4 9.6 L0.8 9.6 Z" fill="#737985"/></svg>
<div class="a t" style="left:76.75px;top:493px;font-size:8.0px;line-height:16px;color:#555;transform:translateX(-50%);">首页</div>
<svg class="a" style="left:103.25px;top:479.00px" width="12.00" height="12.00" viewBox="0 0 20 20"><path d="M3.5 1.5 H16.5 L19 7.5 Q19 9 17.5 9 H2.5 Q1 9 1 7.5 Z" fill="#737985"/><rect x="4.5" y="4" width="11" height="1.3" fill="#fff"/><rect x="3" y="10.5" width="14" height="8.5" rx="1.5" fill="#737985"/><rect x="3" y="13.3" width="14" height="1.2" fill="#fff"/></svg>
<div class="a t" style="left:109.25px;top:493px;font-size:8.0px;line-height:16px;color:#555;transform:translateX(-50%);">店铺</div>
<svg class="a" style="left:136.25px;top:479.00px" width="12.00" height="12.00" viewBox="0 0 20 20"><rect x="1.5" y="1.5" width="17" height="17.5" rx="1.2" fill="#737985"/><rect x="1.5" y="4.6" width="17" height="1.3" fill="#fff"/><path d="M5.8 9.8 Q10 15.2 14.2 9.8" stroke="#fff" stroke-width="1.7" fill="none" stroke-linecap="round"/></svg>
<div class="a t" style="left:142.25px;top:493px;font-size:8.0px;line-height:16px;color:#555;transform:translateX(-50%);">商品</div>
<svg class="a" style="left:169.00px;top:479.00px" width="12.00" height="12.00" viewBox="0 0 20 20"><path d="M3 3.5 Q3 2.5 4 2.5 H16 Q17 2.5 17 3.5 V19 H4 Q3 19 3 18 Z" fill="#737985"/><rect x="6.5" y="0.8" width="7" height="3.5" rx="1" fill="#737985" stroke="#fff" stroke-width="0.9"/><rect x="5.5" y="8" width="6.5" height="1.4" fill="#fff"/><rect x="5.5" y="11.5" width="6.5" height="1.4" fill="#fff"/><rect x="5.5" y="15" width="4" height="1.4" fill="#fff"/><circle cx="15.3" cy="16" r="2.6" fill="#737985" stroke="#fff" stroke-width="1"/></svg>
<div class="a t" style="left:175.00px;top:493px;font-size:8.0px;line-height:16px;color:#555;transform:translateX(-50%);">订单</div>
<svg class="a" style="left:202.00px;top:479.00px" width="12.00" height="12.00" viewBox="0 0 20 20"><circle cx="6.8" cy="5.4" r="3.8" fill="#737985"/><path d="M0.8 17.8 V13.8 Q0.8 10.2 4.4 10.2 H9.2 Q12.8 10.2 12.8 13.8 V17.8 Z" fill="#737985"/><path d="M12.6 2.6 Q17 2.8 17 6.4 Q17 9.6 13.4 9.8 Q14.8 8.2 14.8 6.2 Q14.8 4.2 12.6 2.6 Z" fill="#737985"/><path d="M14.2 10.8 Q18.8 11.2 18.8 14.8 V16.8 H14.2 Z" fill="#737985"/></svg>
<div class="a t" style="left:208.00px;top:493px;font-size:8.0px;line-height:16px;color:#555;transform:translateX(-50%);">会员</div>
<svg class="a" style="left:235.25px;top:479.00px" width="12.00" height="12.00" viewBox="0 0 20 20"><circle cx="5.3" cy="5.3" r="4.6" fill="#f25f6b"/><circle cx="14.7" cy="5.3" r="4.6" fill="#fcc520"/><circle cx="5.3" cy="14.7" r="4.6" fill="#5ba4f5"/><circle cx="14.7" cy="14.7" r="4.6" fill="#2fc25b"/></svg>
<div class="a t" style="left:241.25px;top:493px;font-size:8.0px;line-height:16px;color:#555;transform:translateX(-50%);">营销</div>
<svg class="a" style="left:267.75px;top:479.00px" width="12.00" height="12.00" viewBox="0 0 20 20"><circle cx="10" cy="10" r="9.6" fill="#3f7df0"/><path d="M7 5.8 L9 8.6 M13 5.8 L11 8.6" stroke="#e8efff" stroke-width="1.8" stroke-linecap="round"/><circle cx="10" cy="10.2" r="3.3" fill="#e8efff"/><path d="M10 12 V15" stroke="#e8efff" stroke-width="2" stroke-linecap="round"/></svg>
<div class="a t" style="left:273.75px;top:493px;font-size:8.0px;line-height:16px;color:#4d7ff0;transform:translateX(-50%);">财务</div>
<svg class="a" style="left:300.75px;top:479.00px" width="12.00" height="12.00" viewBox="0 0 20 20"><path d="M3.2 12 V17.2 M7.8 8.5 V17.2 M12.4 4 V17.2 M17 9 V17.2" stroke="#737985" stroke-width="2.7" stroke-linecap="round"/></svg>
<div class="a t" style="left:306.75px;top:493px;font-size:8.0px;line-height:16px;color:#555;transform:translateX(-50%);">数据</div>
<svg class="a" style="left:333.20px;top:479.00px" width="12.00" height="12.00" viewBox="0 0 20 20"><circle cx="10" cy="10" r="6.6" fill="#737985"/><circle cx="10" cy="10" r="7.6" fill="none" stroke="#737985" stroke-width="2.6" stroke-dasharray="3.2 2.77"/><circle cx="10" cy="10" r="2.7" fill="#fff"/></svg>
<div class="a t" style="left:339.20px;top:493px;font-size:8.0px;line-height:16px;color:#555;transform:translateX(-50%);">设置</div>
<svg class="a" style="left:374.30px;top:479.00px" width="12.00" height="12.00" viewBox="0 0 20 20"><path d="M11.5 3 L19.2 10 L11.5 17 L11.5 13 Q4.5 12.6 0.8 18 Q1.6 8.2 11.5 7 Z" fill="#737985" stroke="#737985" stroke-width="0.8" stroke-linejoin="round"/></svg>
<div class="a t" style="left:380.30px;top:493px;font-size:8.0px;line-height:16px;color:#555;transform:translateX(-50%);">推广素材</div>
<svg class="a" style="left:418.70px;top:479.00px" width="12.00" height="12.00" viewBox="0 0 20 20"><circle cx="10" cy="10" r="9.6" fill="#737985"/><path d="M8.6 8.3 V12.2 Q8.6 14.6 6.4 14.6 Q4.5 14.4 4.6 12.6 Q4.8 11 6.4 10.7 M11.4 11.7 V7.8 Q11.4 5.4 13.6 5.4 Q15.5 5.6 15.4 7.4 Q15.2 9 13.6 9.3" stroke="#fff" stroke-width="1.6" fill="none" stroke-linecap="round"/></svg>
<div class="a t" style="left:424.70px;top:493px;font-size:8.0px;line-height:16px;color:#555;transform:translateX(-50%);">小程序</div>
<svg class="a" style="left:464.30px;top:479.00px" width="12.00" height="12.00" viewBox="0 0 20 20"><path d="M10 3.5 L19.5 8 L10 12.5 L0.5 8 Z" fill="#737985"/><path d="M4.3 10.5 V16 Q10 19.3 15.7 16 V10.5 L10 13.3 Z" fill="#737985"/><rect x="7" y="12.8" width="6" height="1" fill="#fff"/></svg>
<div class="a t" style="left:470.30px;top:493px;font-size:8.0px;line-height:16px;color:#555;transform:translateX(-50%);">启博学院</div>
<svg class="a" style="left:508.20px;top:479.00px" width="12.00" height="12.00" viewBox="0 0 20 20"><path d="M9 2.3 A8.3 8.3 0 1 0 17.7 11 L9 11 Z" fill="#737985"/><path d="M11 0.6 A8.4 8.4 0 0 1 19.4 9 L11 9 Z" fill="#737985"/></svg>
<div class="a t" style="left:514.20px;top:493px;font-size:8.0px;line-height:16px;color:#555;transform:translateX(-50%);">SCRM</div>
<svg class="a" style="left:552.60px;top:479.00px" width="12.00" height="12.00" viewBox="0 0 20 20"><path d="M0.7 7 L4.5 1.7 H12.2 L16 7 L8.35 17.2 Z" fill="#fdc530"/><path d="M0.7 7 H16 L8.35 17.2 Z" fill="#f9ad1c"/><path d="M4.5 1.7 L8.35 7 L12.2 1.7 Z" fill="#ffe38f"/><circle cx="16.8" cy="2.6" r="5.2" fill="#ef3f4a" stroke="#fff" stroke-width="0.6"/><path d="M15.2 0.4 V4.8 M18.4 0.4 V4.8 M15.2 2.6 H18.4" stroke="#fff" stroke-width="1"/></svg>
<div class="a t" style="left:558.60px;top:493px;font-size:8.0px;line-height:16px;color:#555;transform:translateX(-50%);">服务市场</div>
<div class="a" style="left:265.50px;top:515.60px;width:15.25px;height:1.60px;background:#4d86f2"></div>
<div class="a" style="left:964.7px;top:485.3px;width:54.09999999999991px;height:15.5px;border-radius:7.75px;background:#dfe9fc"></div>
<svg class="a" style="left:971.68px;top:489.18px" width="7.75" height="7.75" viewBox="0 0 20 20"><path d="M19 1 Q11 1 6 8 L3 8 L1 11 L5 12 L8 15 L9 19 L12 17 L12 14 Q19 9 19 1 Z" fill="#3b72e0"/><circle cx="13" cy="7" r="2" fill="#dfe9fc"/></svg>
<div class="a t" style="left:981.29px;top:486px;font-size:8.1px;line-height:16px;color:#4a7be0;">更多功能</div>
<div class="a" style="left:1015px;top:484.7px;width:14.5px;height:5.300000000000011px;background:#f2404a;border-radius:1px;color:#fff;font-size:3.98px;line-height:5.300000000000011px;text-align:center;font-style:italic;font-weight:bold;letter-spacing:-0.3px">NEW</div>
<div class="a" style="left:1013.50px;top:487.80px;width:0;height:0;border-top:1.5px solid transparent;border-bottom:1.5px solid transparent;border-right:2px solid #f2404a"></div>
<svg class="a" style="left:1041.3px;top:488.8px" width="11.200000000000045" height="10.899999999999977" viewBox="0 0 12 12"><path d="M0.5 3.8 Q0.5 3.3 1 3.3 H3 L7 0.8 V11.2 L3 8.7 H1 Q0.5 8.7 0.5 8.2 Z" fill="#767a82"/><path d="M9 3.6 L11 2.4 M9.2 6 H11.5 M9 8.4 L11 9.6" stroke="#767a82" stroke-width="0.9" stroke-linecap="round"/></svg>
<div class="a" style="left:1072.5px;top:484.5px;width:17.0px;height:17.0px;border-radius:50%;background:#ee5a4a"></div>
<div class="a" style="left:1076.00px;top:470.00px;width:4.00px;height:332.00px;background:#545454"></div>
<div class="a" style="left:5.00px;top:517.00px;width:1071.00px;height:251.00px;background:#f0f0f0"></div>
<div class="a" style="left:5.00px;top:523.00px;width:74.60px;height:245.00px;background:#fff"></div>
<div class="a" style="left:79.60px;top:523.00px;width:106.40px;height:245.00px;background:#f7f7f7;border-left:1px solid #ededed;box-sizing:border-box"></div>
<div class="a" style="left:195.40px;top:522.50px;width:880.60px;height:245.50px;background:#fff"></div>
<div class="a" style="left:7.80px;top:557.60px;width:72.80px;height:23.70px;background:#f7f7f7;border-radius:3px 0 0 3px;border:1px solid #ededed;border-right:none;box-sizing:border-box"></div>
<svg class="a" style="left:13.3px;top:533.40px" width="8.4" height="8.4" viewBox="0 0 12 12"><rect x="1" y="1" width="10" height="10" rx="1.5" stroke="#c4c4c4" stroke-width="1" fill="none"/><path d="M6 3.5 V8.5 M3.5 6 H8.5" stroke="#c4c4c4" stroke-width="1"/></svg>
<div class="a t" style="left:25.20px;top:531px;font-size:8.0px;line-height:16px;color:#555;">财务操作</div>
<svg class="a" style="left:13.3px;top:565.80px" width="8.4" height="8.4" viewBox="0 0 12 12"><rect x="1" y="1" width="10" height="10" rx="1" stroke="#4d7ff0" stroke-width="1" fill="none"/><path d="M3.5 4 H8 M3.5 6.5 H6" stroke="#4d7ff0" stroke-width="1"/></svg>
<div class="a t" style="left:25.20px;top:563px;font-size:8.0px;line-height:16px;color:#4d7ff0;">财务记录</div>
<svg class="a" style="left:13.3px;top:597.70px" width="8.4" height="8.4" viewBox="0 0 12 12"><path d="M1 11 H11 M2.5 10 V4 M5 10 V6 M7.5 10 V2 M10 10 V5" stroke="#c4c4c4" stroke-width="0.9"/></svg>
<div class="a t" style="left:25.20px;top:595px;font-size:8.0px;line-height:16px;color:#555;">财务统计</div>
<svg class="a" style="left:13.3px;top:630.30px" width="8.4" height="8.4" viewBox="0 0 12 12"><rect x="1" y="1" width="8" height="10" rx="1" stroke="#c4c4c4" stroke-width="1" fill="none"/><circle cx="9" cy="9" r="2.5" stroke="#c4c4c4" stroke-width="0.9" fill="#fff"/></svg>
<div class="a t" style="left:25.20px;top:628px;font-size:8.0px;line-height:16px;color:#555;">佣金记录</div>
<svg class="a" style="left:13.3px;top:662.50px" width="8.4" height="8.4" viewBox="0 0 12 12"><circle cx="6" cy="6.5" r="4.8" stroke="#c4c4c4" stroke-width="1" fill="none"/><path d="M6 4 V6.5 H8" stroke="#c4c4c4" stroke-width="0.9" fill="none"/></svg>
<div class="a t" style="left:25.20px;top:660px;font-size:8.0px;line-height:16px;color:#555;">全球分红</div>
<svg class="a" style="left:13.3px;top:694.90px" width="8.4" height="8.4" viewBox="0 0 12 12"><rect x="1.5" y="1" width="9" height="10" rx="1.5" stroke="#c4c4c4" stroke-width="1" fill="none"/><circle cx="6" cy="7" r="2" stroke="#c4c4c4" stroke-width="0.9" fill="none"/></svg>
<div class="a t" style="left:25.20px;top:692px;font-size:8.0px;line-height:16px;color:#555;">积分分红</div>
<div class="a" style="left:87.00px;top:532.00px;width:92.30px;height:16.30px;background:#e3ebfb;border-radius:2px"></div>
<div class="a t" style="left:95.70px;top:533px;font-size:7.55px;line-height:16px;color:#4d7ff0;">提现记录</div>
<div class="a t" style="left:95.70px;top:553px;font-size:7.55px;line-height:16px;color:#707070;">驳回记录</div>
<div class="a t" style="left:95.70px;top:572px;font-size:7.55px;line-height:16px;color:#707070;">分账记录</div>
<div class="a t" style="left:95.70px;top:592px;font-size:7.55px;line-height:16px;color:#707070;">红包记录</div>
<div class="a t" style="left:95.70px;top:612px;font-size:7.55px;line-height:16px;color:#707070;">账号充值记录</div>
<div class="a t" style="left:95.70px;top:632px;font-size:7.55px;line-height:16px;color:#707070;">供应商提现记录</div>
<div class="a t" style="left:95.70px;top:652px;font-size:7.55px;line-height:16px;color:#707070;">拼团退款记录</div>
<div class="a t" style="left:95.70px;top:672px;font-size:7.55px;line-height:16px;color:#707070;">资金监控日志</div>
<div class="a t" style="left:95.70px;top:692px;font-size:7.55px;line-height:16px;color:#707070;">佣金转余额审核</div>
<div class="a t" style="left:95.70px;top:712px;font-size:7.55px;line-height:16px;color:#707070;">通联分账记录</div>
<div class="a" style="left:207.20px;top:538.60px;width:2.20px;height:8.10px;background:#3d7bea"></div>
<div class="a t" style="left:212.50px;top:536px;font-size:7.75px;line-height:16px;color:#222;font-weight:bold;">提现记录</div>
<div class="a" style="left:207.00px;top:561.25px;width:103.75px;height:18.75px;box-sizing:border-box;border:1px solid #dfe1e5;border-radius:2px;background:#fff"></div>
<div class="a t" style="left:213.50px;top:564px;font-size:7.9px;line-height:16px;color:#9a9a9a;">昵称/手机号/会员ID</div>
<div class="a" style="left:315.25px;top:561.25px;width:103.50px;height:18.75px;box-sizing:border-box;border:1px solid #dfe1e5;border-radius:2px;background:#fff"></div>
<div class="a t" style="left:321.75px;top:564px;font-size:7.9px;line-height:16px;color:#9a9a9a;">帐号</div>
<div class="a" style="left:423.50px;top:561.25px;width:103.00px;height:18.75px;box-sizing:border-box;border:1px solid #dfe1e5;border-radius:2px;background:#fff"></div>
<div class="a t" style="left:430.00px;top:564px;font-size:7.9px;line-height:16px;color:#9a9a9a;">支付日期</div>
<svg class="a" style="left:513.75px;top:566.31px" width="8.625" height="8.625" viewBox="0 0 10 10"><rect x="0.5" y="1.2" width="9" height="8.3" rx="1.6" fill="#c4c7cc"/><rect x="1.6" y="3.6" width="6.8" height="4.9" rx="0.5" fill="#eceef1"/><path d="M1.6 5.3 H8.4 M1.6 6.9 H8.4 M3.9 3.6 V8.5 M6.1 3.6 V8.5" stroke="#c4c7cc" stroke-width="0.5"/></svg>
<div class="a t" style="left:532.00px;top:564px;font-size:7.0px;line-height:16px;color:#333;font-weight:500;">至</div>
<div class="a" style="left:543.50px;top:561.25px;width:102.60px;height:18.75px;box-sizing:border-box;border:1px solid #dfe1e5;border-radius:2px;background:#fff"></div>
<div class="a t" style="left:550.00px;top:564px;font-size:7.9px;line-height:16px;color:#9a9a9a;">支付日期</div>
<svg class="a" style="left:633.35px;top:566.31px" width="8.625" height="8.625" viewBox="0 0 10 10"><rect x="0.5" y="1.2" width="9" height="8.3" rx="1.6" fill="#c4c7cc"/><rect x="1.6" y="3.6" width="6.8" height="4.9" rx="0.5" fill="#eceef1"/><path d="M1.6 5.3 H8.4 M1.6 6.9 H8.4 M3.9 3.6 V8.5 M6.1 3.6 V8.5" stroke="#c4c7cc" stroke-width="0.5"/></svg>
<div class="a" style="left:651.80px;top:562.00px;width:37.50px;height:16.30px;background:#3b7ded;border-radius:2px"></div>
<svg class="a" style="left:660.80px;top:566.48px" width="7.33" height="7.33" viewBox="0 0 10 10"><circle cx="4.3" cy="4.3" r="3.4" stroke="#fff" stroke-width="1.1" fill="none"/><path d="M6.8 6.8 L9.3 9.3" stroke="#fff" stroke-width="1.1"/></svg>
<div class="a t" style="left:669.34px;top:564px;font-size:6.8px;line-height:16px;color:#fff;">查询</div>
<div class="a" style="left:692.10px;top:562.00px;width:37.80px;height:16.30px;background:#62bb3a;border-radius:2px"></div>
<svg class="a" style="left:701.17px;top:566.48px" width="7.33" height="7.33" viewBox="0 0 10 10"><path d="M5 1 H1 V9 H9 V5" stroke="#fff" stroke-width="1.1" fill="none"/><path d="M4.5 5.5 L9 1 M6 1 H9 V4" stroke="#fff" stroke-width="1.1" fill="none"/></svg>
<div class="a t" style="left:709.71px;top:564px;font-size:6.8px;line-height:16px;color:#fff;">导出</div>
<div class="a" style="left:207.00px;top:586.30px;width:851.60px;height:33.20px;background:#eff0f4"></div>
<div class="a" style="left:1058.60px;top:586.00px;width:17.40px;height:1.00px;background:#f0f0f0"></div>
<div class="a t" style="left:213.75px;top:596px;font-size:8px;line-height:16px;color:#333;font-weight:bold;">昵称<span class=sl>/</span>手机号</div>
<div class="a t" style="left:290.75px;top:596px;font-size:8px;line-height:16px;color:#333;font-weight:bold;">申请时间</div>
<div class="a t" style="left:405.50px;top:596px;font-size:8px;line-height:16px;color:#333;font-weight:bold;">提现金额（元）</div>
<div class="a t" style="left:482.40px;top:596px;font-size:8px;line-height:16px;color:#333;font-weight:bold;">实付金额（元）</div>
<div class="a t" style="left:559.60px;top:596px;font-size:8px;line-height:16px;color:#333;font-weight:bold;">帐号</div>
<div class="a t" style="left:670.70px;top:596px;font-size:8px;line-height:16px;color:#333;font-weight:bold;">收款人</div>
<div class="a t" style="left:892.10px;top:596px;font-size:8px;line-height:16px;color:#333;font-weight:bold;">支付日期</div>
<div class="a t" style="left:978.40px;top:596px;font-size:8px;line-height:16px;color:#333;font-weight:bold;">备注</div>
<div class="a t" style="left:757.30px;top:590px;font-size:8px;line-height:16px;color:#333;font-weight:bold;">支付类型 | 流水号 | 微信支付批次</div>
<div class="a t" style="left:757.30px;top:602px;font-size:8px;line-height:16px;color:#333;font-weight:bold;">单号</div>
<div class="a" style="left:207.00px;top:619.50px;width:851.60px;height:45.20px;background:#f0f6fb"></div>
<div class="a" style="left:207.00px;top:664.20px;width:851.60px;height:1.00px;background:#f2f2f2"></div>
<div class="a" style="left:207.00px;top:697.90px;width:851.60px;height:1.00px;background:#f2f2f2"></div>
<div class="a" style="left:207.00px;top:731.00px;width:851.60px;height:1.00px;background:#f2f2f2"></div>
<div class="a t" style="left:214.20px;top:629px;font-size:8.4px;line-height:16px;color:#555;">王&nbsp;英&nbsp;雄</div>
<div class="a t" style="left:214.20px;top:640px;font-size:9.0px;line-height:16px;color:#4a4a4a;transform:scaleX(0.933);transform-origin:0 0;">13076198446</div>
<div class="a t" style="left:290.70px;top:634px;font-size:9.0px;line-height:16px;color:#4a4a4a;transform:scaleX(0.933);transform-origin:0 0;">2022-08-20 16:52:21</div>
<div class="a t" style="left:406.20px;top:634px;font-size:9.0px;line-height:16px;color:#4a4a4a;transform:scaleX(0.933);transform-origin:0 0;">100.00</div>
<div class="a t" style="left:482.70px;top:623px;font-size:9.0px;line-height:16px;color:#4a4a4a;transform:scaleX(0.933);transform-origin:0 0;">92.00</div>
<div class="a t" style="left:482.70px;top:635px;font-size:8.4px;line-height:16px;color:#555;">(佣金转余额</div>
<div class="a t" style="left:482.70px;top:646px;font-size:9.0px;line-height:16px;color:#4a4a4a;transform:scaleX(0.933);transform-origin:0 0;">20.00)</div>
<div class="a t" style="left:559.50px;top:634px;font-size:9.0px;line-height:16px;color:#4a4a4a;transform:scaleX(0.933);transform-origin:0 0;">13076198446</div>
<div class="a t" style="left:670.70px;top:634px;font-size:9.0px;line-height:16px;color:#4a4a4a;transform:scaleX(0.933);transform-origin:0 0;">1</div>
<div class="a t" style="left:757.30px;top:629px;font-size:8.4px;line-height:16px;color:#555;">支付宝</div>
<div class="a t" style="left:757.30px;top:640px;font-size:9.0px;line-height:16px;color:#4a4a4a;transform:scaleX(0.933);transform-origin:0 0;">111</div>
<div class="a t" style="left:892.00px;top:629px;font-size:9.0px;line-height:16px;color:#4a4a4a;transform:scaleX(0.933);transform-origin:0 0;">2022-08-20</div>
<div class="a t" style="left:892.00px;top:640px;font-size:9.0px;line-height:16px;color:#4a4a4a;transform:scaleX(0.933);transform-origin:0 0;">16:52:58</div>
<div class="a t" style="left:978.40px;top:635px;font-size:8.4px;line-height:16px;color:#555;">佣金提现</div>
<div class="a t" style="left:214.20px;top:674px;font-size:8.4px;line-height:16px;color:#555;">啊不简单</div>
<div class="a t" style="left:290.70px;top:674px;font-size:9.0px;line-height:16px;color:#4a4a4a;transform:scaleX(0.933);transform-origin:0 0;">2016-04-08 11:52:35</div>
<div class="a t" style="left:406.20px;top:674px;font-size:9.0px;line-height:16px;color:#4a4a4a;transform:scaleX(0.933);transform-origin:0 0;">56.00</div>
<div class="a t" style="left:482.70px;top:674px;font-size:9.0px;line-height:16px;color:#4a4a4a;transform:scaleX(0.933);transform-origin:0 0;">56.00</div>
<div class="a t" style="left:559.50px;top:674px;font-size:9.0px;line-height:16px;color:#4a4a4a;transform:scaleX(0.933);transform-origin:0 0;">13735862584</div>
<div class="a t" style="left:670.70px;top:674px;font-size:8.4px;line-height:16px;color:#555;">看看</div>
<div class="a t" style="left:757.30px;top:668px;font-size:8.4px;line-height:16px;color:#555;">支付宝</div>
<div class="a t" style="left:757.30px;top:680px;font-size:9.0px;line-height:16px;color:#4a4a4a;transform:scaleX(0.933);transform-origin:0 0;">A1460087582820285009</div>
<div class="a t" style="left:892.00px;top:668px;font-size:9.0px;line-height:16px;color:#4a4a4a;transform:scaleX(0.933);transform-origin:0 0;">2022-07-27</div>
<div class="a t" style="left:892.00px;top:680px;font-size:9.0px;line-height:16px;color:#4a4a4a;transform:scaleX(0.933);transform-origin:0 0;">19:54:48</div>
<div class="a t" style="left:978.40px;top:674px;font-size:8.4px;line-height:16px;color:#555;">余额提现</div>
<div class="a t" style="left:214.20px;top:708px;font-size:8.4px;line-height:16px;color:#555;">啊不简单</div>
<div class="a t" style="left:290.70px;top:708px;font-size:9.0px;line-height:16px;color:#4a4a4a;transform:scaleX(0.933);transform-origin:0 0;">2016-04-08 11:51:04</div>
<div class="a t" style="left:406.20px;top:708px;font-size:9.0px;line-height:16px;color:#4a4a4a;transform:scaleX(0.933);transform-origin:0 0;">20.00</div>
<div class="a t" style="left:482.70px;top:708px;font-size:9.0px;line-height:16px;color:#4a4a4a;transform:scaleX(0.933);transform-origin:0 0;">20.00</div>
<div class="a t" style="left:670.70px;top:708px;font-size:8.4px;line-height:16px;color:#555;">急急急</div>
<div class="a t" style="left:757.30px;top:701px;font-size:8.4px;line-height:16px;color:#555;">微信支付</div>
<div class="a t" style="left:757.30px;top:713px;font-size:9.0px;line-height:16px;color:#4a4a4a;transform:scaleX(0.933);transform-origin:0 0;">23456754321234</div>
<div class="a t" style="left:892.00px;top:701px;font-size:9.0px;line-height:16px;color:#4a4a4a;transform:scaleX(0.933);transform-origin:0 0;">2022-07-27</div>
<div class="a t" style="left:892.00px;top:713px;font-size:9.0px;line-height:16px;color:#4a4a4a;transform:scaleX(0.933);transform-origin:0 0;">19:45:10</div>
<div class="a t" style="left:978.40px;top:708px;font-size:8.4px;line-height:16px;color:#555;">余额提现</div>
<div class="a t" style="left:214.20px;top:734px;font-size:8.4px;line-height:16px;color:#555;">Yan<svg width="9" height="8" viewBox="0 0 10 9" style="vertical-align:-1px;margin:0 0.5px"><path d="M5 0 L6.3 3 L10 3.5 L7 5.6 L8 9 L5 7 L2 9 L3 5.6 L0 3.5 L3.7 3 Z" fill="#e8c21a"/><ellipse cx="5" cy="5.3" rx="1.9" ry="2.5" fill="#111"/></svg>li</div>
<div class="a t" style="left:214.20px;top:746px;font-size:9.0px;line-height:16px;color:#4a4a4a;transform:scaleX(0.933);transform-origin:0 0;">15825526904</div>
<div class="a t" style="left:290.70px;top:740px;font-size:9.0px;line-height:16px;color:#4a4a4a;transform:scaleX(0.933);transform-origin:0 0;">2016-04-07 14:27:46</div>
<div class="a t" style="left:406.20px;top:740px;font-size:9.0px;line-height:16px;color:#4a4a4a;transform:scaleX(0.933);transform-origin:0 0;">1.00</div>
<div class="a t" style="left:482.70px;top:740px;font-size:9.0px;line-height:16px;color:#4a4a4a;transform:scaleX(0.933);transform-origin:0 0;">1.00</div>
<div class="a t" style="left:670.70px;top:740px;font-size:9.0px;line-height:16px;color:#4a4a4a;transform:scaleX(0.933);transform-origin:0 0;">1</div>
<div class="a t" style="left:757.30px;top:734px;font-size:8.4px;line-height:16px;color:#555;">微信支付</div>
<div class="a t" style="left:757.30px;top:746px;font-size:9.0px;line-height:16px;color:#4a4a4a;transform:scaleX(0.933);transform-origin:0 0;">12123213</div>
<div class="a t" style="left:892.00px;top:734px;font-size:9.0px;line-height:16px;color:#4a4a4a;transform:scaleX(0.933);transform-origin:0 0;">2022-07-27</div>
<div class="a t" style="left:892.00px;top:746px;font-size:9.0px;line-height:16px;color:#4a4a4a;transform:scaleX(0.933);transform-origin:0 0;">19:30:21</div>
<div class="a t" style="left:978.40px;top:740px;font-size:8.4px;line-height:16px;color:#555;">佣金提现</div>
<div class="a" style="left:0.00px;top:768.00px;width:1080.00px;height:34.00px;background:#545454"></div>
</body></html>
